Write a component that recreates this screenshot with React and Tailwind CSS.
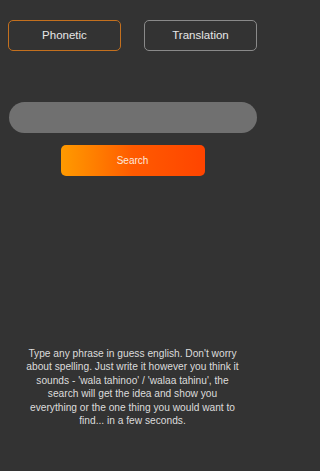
import React, { useState } from "react";

const App = () => {
  const [mode, setMode] = useState("phonetic");
  const [query, setQuery] = useState("");

  return (
    <div
      className="w-full min-h-screen bg-[#333333]"
      style={{ fontFamily: '"Liberation Sans", Arial, sans-serif' }}
    >
      <div className="w-[265px] flex flex-col items-center">
        <div className="w-full flex justify-between px-[8px] pt-[20px]">
          <button
            onClick={() => setMode("phonetic")}
            className={`w-[113px] h-[31px] rounded-[5px] border-[1.5px] text-[11.5px] text-[#e6e6e6] ${
              mode === "phonetic" ? "border-[#c4701e]" : "border-[#8a8a8a]"
            }`}
          >
            Phonetic
          </button>
          <button
            onClick={() => setMode("translation")}
            className={`w-[113px] h-[31px] rounded-[5px] border-[1.5px] text-[11.5px] text-[#e6e6e6] ${
              mode === "translation" ? "border-[#c4701e]" : "border-[#8a8a8a]"
            }`}
          >
            Translation
          </button>
        </div>

        <input
          value={query}
          onChange={(e) => setQuery(e.target.value)}
          className="mt-[51px] w-[248px] h-[31px] rounded-full bg-[#707070] px-4 text-[12px] text-white outline-none"
        />

        <button className="mt-[12px] w-[144px] h-[31px] rounded-[5px] bg-gradient-to-r from-[#ff9a00] via-[#ff5a00] to-[#ff4400] text-[10px] text-[#fde8dc]">
          Search
        </button>

        <p className="mt-[171px] w-[214px] text-center text-[10.2px] leading-[13.4px] text-[#dcdcdc]">
          Type any phrase in guess english. Don't worry about spelling. Just
          write it however you think it sounds - 'wala tahinoo' / 'walaa
          tahinu', the search will get the idea and show you everything or
          the one thing you would want to find... in a few seconds.
        </p>
      </div>
    </div>
  );
};

export default App;
